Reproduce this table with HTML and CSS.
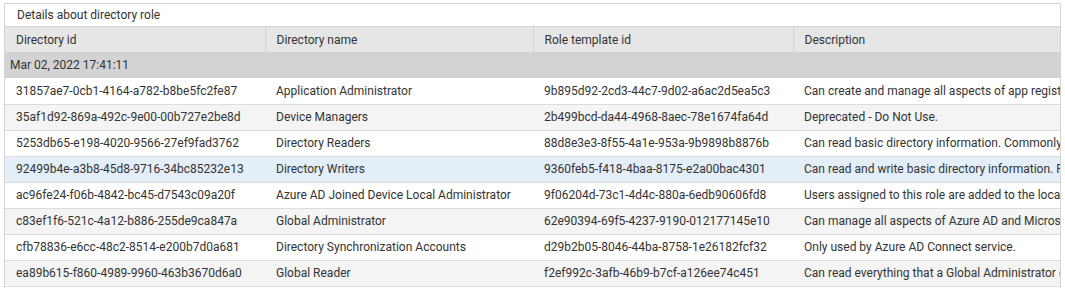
FILE: index.html
```html
<!DOCTYPE html>
<html lang="en">
<head>
  <meta charset="UTF-8" />
  <title>Details about directory role</title>
  <link rel="stylesheet" href="styles.css">
</head>
<body>
  <!-- Report panel -->
  <div class="panel">
    <div class="panel-title">Details about directory role</div>
    <div class="grid-wrap">
      <table class="grid">
        <colgroup>
          <col class="col-id">
          <col class="col-name">
          <col class="col-template">
          <col class="col-desc">
        </colgroup>
        <thead>
          <tr>
            <th>Directory id</th>
            <th>Directory name</th>
            <th>Role template id</th>
            <th>Description</th>
          </tr>
        </thead>
        <tbody>
          <tr class="group-row">
            <td colspan="4">Mar 02, 2022 17:41:11</td>
          </tr>
          <tr>
            <td>31857ae7-0cb1-4164-a782-b8be5fc2fe87</td>
            <td>Application Administrator</td>
            <td>9b895d92-2cd3-44c7-9d02-a6ac2d5ea5c3</td>
            <td>Can create and manage all aspects of app registrations and enterprise apps.</td>
          </tr>
          <tr class="alt">
            <td>35af1d92-869a-492c-9e00-00b727e2be8d</td>
            <td>Device Managers</td>
            <td>2b499bcd-da44-4968-8aec-78e1674fa64d</td>
            <td>Deprecated - Do Not Use.</td>
          </tr>
          <tr>
            <td>5253db65-e198-4020-9566-27ef9fad3762</td>
            <td>Directory Readers</td>
            <td>88d8e3e3-8f55-4a1e-953a-9b9898b8876b</td>
            <td>Can read basic directory information. Commonly used to grant directory read access.</td>
          </tr>
          <tr class="selected">
            <td>92499b4e-a3b8-45d8-9716-34bc85232e13</td>
            <td>Directory Writers</td>
            <td>9360feb5-f418-4baa-8175-e2a00bac4301</td>
            <td>Can read and write basic directory information. For granting access to applications.</td>
          </tr>
          <tr>
            <td>ac96fe24-f06b-4842-bc45-d7543c09a20f</td>
            <td>Azure AD Joined Device Local Administrator</td>
            <td>9f06204d-73c1-4d4c-880a-6edb90606fd8</td>
            <td>Users assigned to this role are added to the local administrators group.</td>
          </tr>
          <tr class="alt">
            <td>c83ef1f6-521c-4a12-b886-255de9ca847a</td>
            <td>Global Administrator</td>
            <td>62e90394-69f5-4237-9190-012177145e10</td>
            <td>Can manage all aspects of Azure AD and Microsoft services that use Azure AD identities.</td>
          </tr>
          <tr>
            <td>cfb78836-e6cc-48c2-8514-e200b7d0a681</td>
            <td>Directory Synchronization Accounts</td>
            <td>d29b2b05-8046-44ba-8758-1e26182fcf32</td>
            <td>Only used by Azure AD Connect service.</td>
          </tr>
          <tr class="alt">
            <td>ea89b615-f860-4989-9960-463b3670d6a0</td>
            <td>Global Reader</td>
            <td>f2ef992c-3afb-46b9-b7cf-a126ee74c451</td>
            <td>Can read everything that a Global Administrator can, but not update anything.</td>
          </tr>
          <tr>
            <td>&nbsp;</td>
            <td></td>
            <td></td>
            <td></td>
          </tr>
        </tbody>
      </table>
    </div>
  </div>
</body>
</html>
```

FILE: styles.css
```css
* {
  margin: 0;
  padding: 0;
  box-sizing: border-box;
}

html, body {
  height: 100%;
  overflow: hidden;
  background: #fff;
  font-family: Roboto, "Liberation Sans", sans-serif;
  font-size: 12px;
  color: #333;
}

.panel {
  margin: 3px 0 0 4px;
  width: 1057px;
  border: 1px solid #d4d4d4;
  border-bottom: none;
  overflow: hidden;
}

.panel-title {
  height: 23px;
  line-height: 22px;
  padding-left: 12px;
  border-bottom: 1px solid #d4d4d4;
  background: #fff;
}

.grid-wrap {
  overflow: hidden;
}

.grid {
  width: 1300px;
  table-layout: fixed;
  border-collapse: collapse;
}

.col-id { width: 260px; }
.col-name { width: 268px; }
.col-template { width: 260px; }
.col-desc { width: 512px; }

.grid th {
  height: 25px;
  padding: 1px 11px 0;
  background: #e6e6e6;
  font-weight: normal;
  text-align: left;
  border-right: 1px solid #d2d2d2;
  border-bottom: 1px solid #d2d2d2;
  white-space: nowrap;
}

.grid td {
  height: 26px;
  padding: 0 11px;
  white-space: nowrap;
  overflow: hidden;
  border-bottom: 1px solid #dcdcdc;
}

.grid tr.alt td {
  background: #f4f4f4;
}

.grid tr.selected td {
  background: #e3eef9;
}

.grid tr.group-row td {
  height: 26px;
  background: #d3d3d3;
  padding-left: 5px;
  border-bottom: none;
}
```
